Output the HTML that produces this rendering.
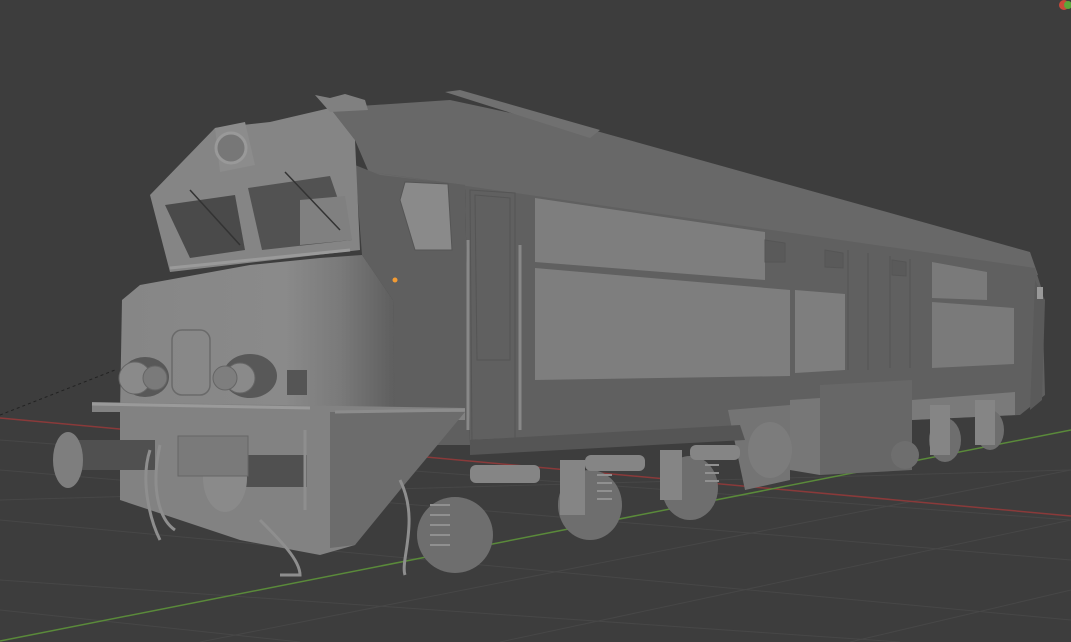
<!DOCTYPE html>
<html><head><style>
html,body{margin:0;padding:0;background:#3d3d3d;overflow:hidden;}
svg{display:block;}
</style></head><body>
<svg width="1071" height="642" viewBox="0 0 1071 642" xmlns="http://www.w3.org/2000/svg">
<defs>
<linearGradient id="nose" x1="0" x2="1" y1="0" y2="0">
<stop offset="0" stop-color="#868686"/><stop offset="0.6" stop-color="#8a8a8a"/><stop offset="0.8" stop-color="#7a7a7a"/><stop offset="1" stop-color="#5e5e5e"/>
</linearGradient>
</defs>
<rect width="1071" height="642" fill="#3d3d3d"/>
<g stroke="#474747" stroke-width="1" fill="none">
<path d="M0 470 L1071 560"/><path d="M0 520 L1071 620"/><path d="M0 580 L900 642"/>
<path d="M0 440 L1071 520"/><path d="M200 642 L1071 470"/><path d="M500 642 L1071 520"/>
<path d="M0 610 L300 642"/><path d="M850 642 L1071 590"/><path d="M0 500 L1071 470"/>
</g>
<path d="M0 418 L1071 516" stroke="#8a3a3a" stroke-width="1.5"/>
<path d="M0 641 L1071 430" stroke="#5a8a3a" stroke-width="1.5"/>
<path d="M0 415 L115 370" stroke="#222" stroke-dasharray="3,3"/>

<!-- roof -->
<polygon points="330,108 450,100 600,132 1030,252 1038,275 370,175 355,140" fill="#686868"/>
<polygon points="445,92 460,90 600,130 590,138" fill="#707070"/>
<!-- side wall -->
<polygon points="370,172 1035,268 1042,290 1045,395 1020,415 470,440 465,185" fill="#606060"/>
<polygon points="535,198 765,232 765,280 535,262" fill="#7e7e7e"/>
<polygon points="535,268 790,290 790,376 535,380" fill="#7e7e7e"/>
<polygon points="795,290 845,294 845,370 795,373" fill="#7e7e7e"/>
<polygon points="932,262 987,272 987,300 932,298" fill="#7a7a7a"/>
<polygon points="932,302 1014,308 1014,364 932,368" fill="#7a7a7a"/>
<g stroke="#555" stroke-width="1">
<path d="M765 240 L785 243 L785 262 L765 262Z" fill="#5a5a5a"/>
<path d="M825 250 L843 253 L843 268 L825 267Z" fill="#5a5a5a"/>
<path d="M892 260 L906 262 L906 276 L892 275Z" fill="#5a5a5a"/>
<path d="M848 250 V370 M868 253 V370 M890 256 V368 M910 259 V368"/>
</g>
<!-- fuel tank -->
<polygon points="820,385 912,380 912,470 820,475" fill="#676767"/>
<polygon points="790,400 820,398 820,475 790,470" fill="#777"/>
<polygon points="728,410 790,405 790,480 745,490" fill="#747474"/>
<polygon points="912,400 1015,392 1015,415 912,420" fill="#7a7a7a"/>
<!-- bogies -->
<polygon points="470,440 740,425 745,440 470,455" fill="#555"/>
<g fill="#6e6e6e">
<ellipse cx="590" cy="505" rx="32" ry="35"/>
<ellipse cx="690" cy="488" rx="28" ry="32"/>
<ellipse cx="455" cy="535" rx="38" ry="38"/>
<ellipse cx="905" cy="455" rx="14" ry="14"/>
<ellipse cx="945" cy="440" rx="16" ry="22"/>
<ellipse cx="990" cy="430" rx="14" ry="20"/>
</g>
<g fill="#858585">
<rect x="470" y="465" width="70" height="18" rx="6"/>
<rect x="585" y="455" width="60" height="16" rx="6"/>
<rect x="690" y="445" width="50" height="15" rx="6"/>
<rect x="560" y="460" width="25" height="55"/>
<rect x="660" y="450" width="22" height="50"/>
<ellipse cx="770" cy="450" rx="22" ry="28" fill="#7c7c7c"/>
<rect x="930" y="405" width="20" height="50"/>
<rect x="975" y="400" width="20" height="45"/>
</g>
<g stroke="#909090" stroke-width="2" fill="none">
<path d="M430 505 h20 M430 515 h20 M430 525 h20 M430 535 h20 M430 545 h20"/>
<path d="M597 475 h15 M597 483 h15 M597 491 h15 M597 499 h15"/>
<path d="M705 465 h14 M705 473 h14 M705 481 h14"/>
</g>
<!-- cab side -->
<polygon points="355,165 380,175 465,185 470,445 395,445 393,300 362,255" fill="#5f5f5f"/>
<path d="M405 182 L448 184 L452 250 L415 250 L400 200Z" fill="#8a8a8a" stroke="#555"/>
<path d="M470 190 L515 193 L515 445 L472 445Z" fill="none" stroke="#555"/>
<path d="M475 195 L510 198 L510 360 L477 360Z" fill="none" stroke="#555"/>
<path d="M468 240 V430 M520 245 V430" stroke="#888" stroke-width="3" fill="none"/>
<circle cx="395" cy="280" r="2.5" fill="#f39b33"/>
<!-- cab front upper -->
<polygon points="150,195 215,128 270,122 330,108 355,140 360,250 170,272" fill="#858585"/>
<polygon points="215,128 245,122 255,165 220,172" fill="#8c8c8c"/>
<circle cx="231" cy="148" r="15" fill="#777" stroke="#999" stroke-width="3"/>
<polygon points="165,205 235,195 245,250 190,258" fill="#4a4a4a"/>
<polygon points="248,188 330,176 352,240 262,250" fill="#525252"/>
<polygon points="300,200 345,196 352,240 300,245" fill="#808080"/>
<path d="M170 268 L350 250" stroke="#9a9a9a" stroke-width="3"/>
<path d="M190 190 L240 245 M285 172 L340 230" stroke="#333" stroke-width="1.5"/>
<path d="M315 95 L330 98 L345 94 L365 100 L368 110 L330 112Z" fill="#808080"/>
<!-- nose -->
<polygon points="122,300 140,285 250,265 320,258 362,255 393,300 395,412 120,412" fill="url(#nose)"/>
<rect x="172" y="330" width="38" height="65" rx="10" fill="none" stroke="#6a6a6a" stroke-width="1.5"/>
<ellipse cx="145" cy="377" rx="24" ry="20" fill="#585858"/>
<circle cx="135" cy="378" r="16" fill="#8a8a8a" stroke="#666"/>
<circle cx="155" cy="378" r="12" fill="#7a7a7a" stroke="#666"/>
<ellipse cx="250" cy="376" rx="27" ry="22" fill="#585858"/>
<circle cx="240" cy="378" r="15" fill="#8a8a8a" stroke="#666"/>
<circle cx="225" cy="378" r="12" fill="#7e7e7e" stroke="#666"/>
<rect x="287" y="370" width="20" height="25" fill="#555"/>
<!-- front lower -->
<polygon points="92,402 465,408 465,420 420,420 355,545 320,555 240,540 120,500 120,412 92,412" fill="#828282"/>
<polygon points="330,412 465,412 400,490 355,545 330,548" fill="#6c6c6c"/>
<path d="M92 404 L310 408" stroke="#9a9a9a" stroke-width="3"/>
<path d="M335 412 L465 410" stroke="#8c8c8c" stroke-width="3"/>
<rect x="70" y="440" width="85" height="30" fill="#505050"/>
<ellipse cx="68" cy="460" rx="15" ry="28" fill="#7e7e7e"/>
<rect x="225" y="455" width="82" height="32" fill="#505050"/>
<ellipse cx="225" cy="478" rx="22" ry="34" fill="#8a8a8a"/>
<rect x="178" y="436" width="70" height="40" fill="#7a7a7a" stroke="#666"/>
<g stroke="#8e8e8e" stroke-width="3" fill="none">
<path d="M150 450 C140 480,150 520,160 540"/>
<path d="M160 445 C150 490,160 520,175 530"/>
<path d="M260 520 C280 540,300 560,300 575 L280 575"/>
<path d="M305 430 V510"/>
<path d="M400 480 C420 520,400 560,405 575"/>
</g>
<path d="M1035 280 L1045 300 L1042 400 L1030 410Z" fill="#5a5a5a"/>
<rect x="1037" y="287" width="6" height="12" fill="#999"/>
<circle cx="1064" cy="5" r="5" fill="#c94a3a"/><circle cx="1068" cy="5" r="4" fill="#5aa83a"/>
</svg>
</body></html>
